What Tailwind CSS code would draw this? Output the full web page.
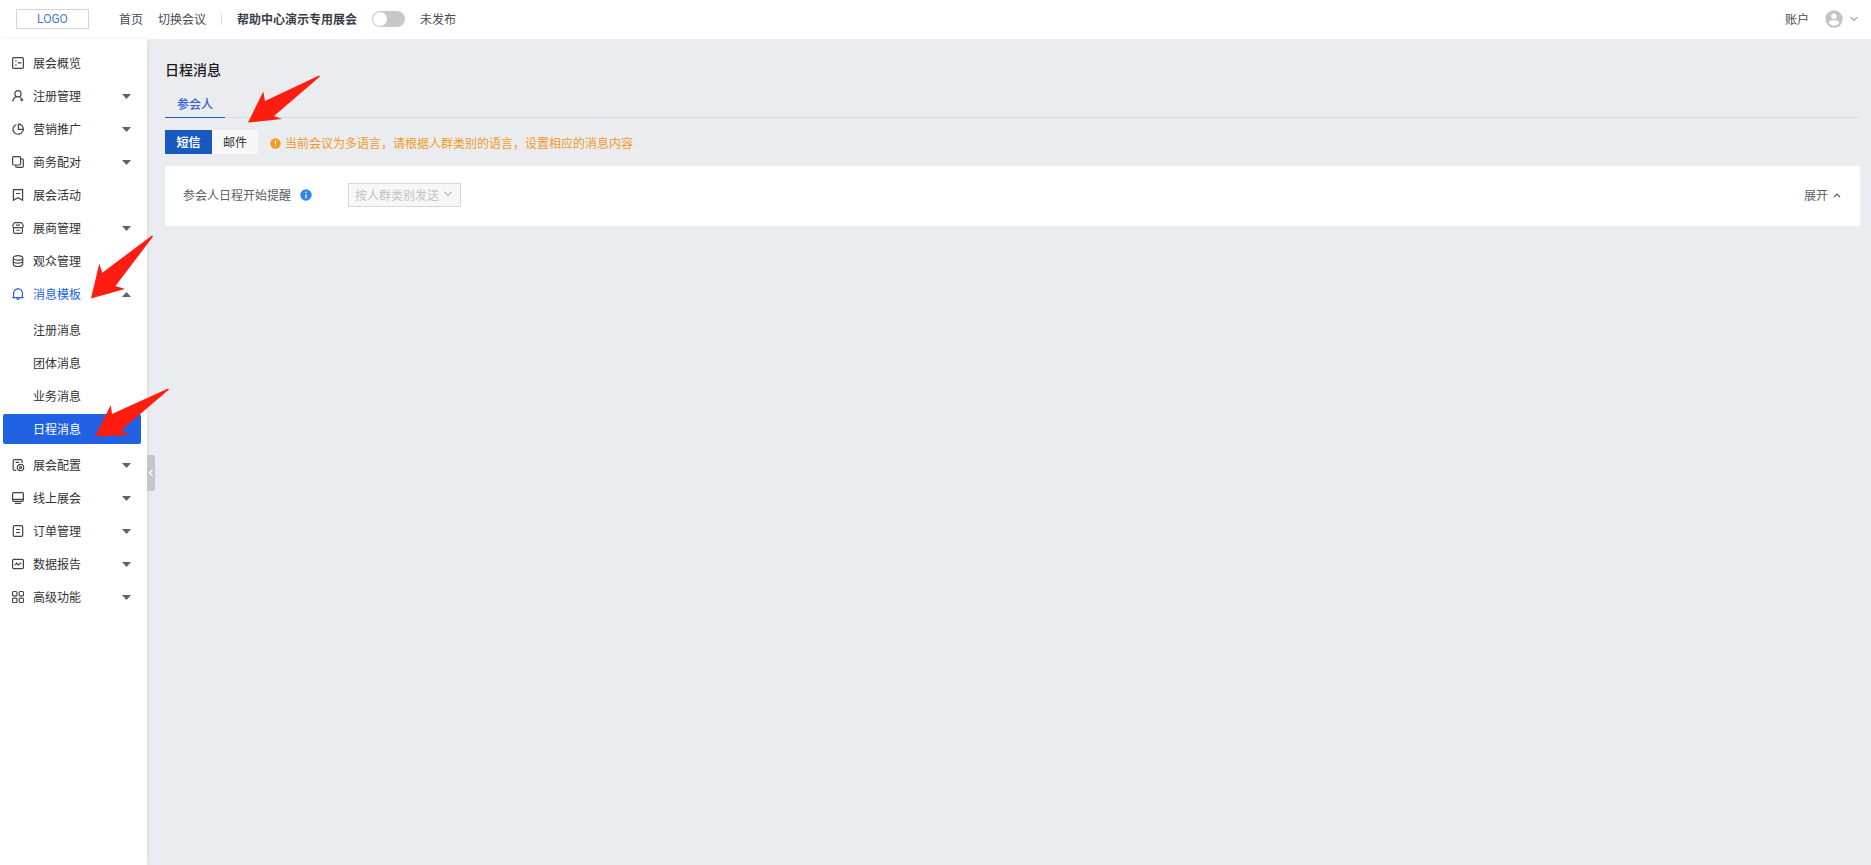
<!DOCTYPE html>
<html lang="zh-CN">
  <head>
    <meta charset="UTF-8" />
    <meta name="viewport" content="width=device-width, initial-scale=1.0" />
    <title>日程消息</title>

    <!-- Tailwind CSS -->
    <script src="https://cdn.jsdelivr.net/npm/@tailwindcss/browser@4"></script>
  </head>
  <body class="relative flex min-h-screen flex-col bg-[#eaecf0] font-['Noto_Sans_CJK_SC',sans-serif] text-[12px] leading-[18px] text-[#333]">
    <!-- Header -->
    <header class="flex h-[39px] shrink-0 items-center bg-white pr-3 pb-[2px] pl-4 text-[#474c55]">
      <a href="#" class="flex h-5 w-[73px] items-center justify-center border border-[#ccd5e2] font-[Roboto,sans-serif] text-[#4c7ac6]">LOGO</a>
      <nav class="ml-[30px] flex items-center">
        <a href="#">首页</a>
        <a href="#" class="ml-[15px]">切换会议</a>
      </nav>
      <span class="ml-[15px] h-3 w-px bg-[#dcdfe6]"></span>
      <h1 class="ml-[15px] font-bold text-[#3a3f48]">帮助中心演示专用展会</h1>
      <label class="ml-[15px] flex items-center gap-[15px]">
        <input type="checkbox" role="switch" class="peer sr-only" />
        <span class="flex h-4 w-[33px] items-center rounded-full bg-[#c8c8c8] px-px peer-checked:justify-end peer-checked:bg-[#2161e4]"><span class="size-[14px] rounded-full bg-white"></span></span>
        <span>未发布</span>
      </label>

      <div class="ml-auto flex items-center">
        <a href="#">账户</a>
        <button aria-label="用户菜单" class="ml-4 flex items-center gap-[6px]">
          <svg viewBox="0 0 18 18" class="size-[18px]">
            <circle cx="9" cy="9" r="8.7" fill="#c4c4c6" />
            <circle cx="9" cy="6.3" r="2.7" fill="#fff" />
            <path d="M3.8 12.9c0-1.900 2.500-2.600 5.200-2.600s5.200.7 5.200 2.600c-1.100 1.700-3 2.600-5.200 2.600s-4.100-.9-5.200-2.600z" fill="#fff" />
          </svg>
          <svg viewBox="0 0 10 10" class="size-[10px]" fill="none" stroke="#a3a6ad" stroke-width="1.100"><path d="M1.500 3 5 6.500 8.500 3" /></svg>
        </button>
      </div>
    </header>

    <div class="flex flex-1">
      <!-- Sidebar -->
      <aside class="z-10 w-[147px] shrink-0 bg-white pt-[9px] pr-[6px] pl-[3px] shadow-[1px_0_4px_rgba(0,0,0,0.08)]">
        <nav class="flex flex-col gap-[3px]">
          <a href="#" class="flex h-[30px] items-center gap-2 pr-[10px] pl-2">
            <svg viewBox="0 0 14 14" class="size-[14px]" fill="none" stroke="#444" stroke-width="1.200"><rect x="1.600" y="1.600" width="10.800" height="10.800" rx="1.200" /><path d="M4 5h1.800M4 9h1.800M6.800 6.900h3.700" /></svg>
            <span>展会概览</span>
          </a>
          <button class="flex h-[30px] items-center gap-2 pr-[10px] pl-2">
            <svg viewBox="0 0 14 14" class="size-[14px]" fill="none" stroke="#444" stroke-width="1.200"><circle cx="7" cy="4.700" r="3.100" /><path d="M2 12.500c0-2.600 1.500-4.300 3.600-4.900M8.500 7.600l1.700 1.600M10.800 9.300v3M9.300 10.800h3" /></svg>
            <span>注册管理</span>
            <svg viewBox="0 0 9 5" class="ml-auto h-[5px] w-[9px]" fill="#606266"><path d="M0 0h9L4.500 5z" /></svg>
          </button>
          <button class="flex h-[30px] items-center gap-2 pr-[10px] pl-2">
            <svg viewBox="0 0 14 14" class="size-[14px]" fill="none" stroke="#444" stroke-width="1.200"><path d="M5.400 2.500a5 5 0 1 0 6.200 6.600M7.400 1.900v5.400h5M7.400 1.900a5.200 5.200 0 0 1 5 5.400q0 1-.8 1.800" /></svg>
            <span>营销推广</span>
            <svg viewBox="0 0 9 5" class="ml-auto h-[5px] w-[9px]" fill="#606266"><path d="M0 0h9L4.500 5z" /></svg>
          </button>
          <button class="flex h-[30px] items-center gap-2 pr-[10px] pl-2">
            <svg viewBox="0 0 14 14" class="size-[14px]" fill="none" stroke="#444" stroke-width="1.200"><rect x="1.600" y="1.600" width="8" height="8.400" rx="1.200" /><path d="M9.800 3.800h1.200q1.300 0 1.300 1.200v6.200q0 1.200-1.200 1.200H6q-1.200 0-1.200-1.200V10" /></svg>
            <span>商务配对</span>
            <svg viewBox="0 0 9 5" class="ml-auto h-[5px] w-[9px]" fill="#606266"><path d="M0 0h9L4.500 5z" /></svg>
          </button>
          <a href="#" class="flex h-[30px] items-center gap-2 pr-[10px] pl-2">
            <svg viewBox="0 0 14 14" class="size-[14px]" fill="none" stroke="#444" stroke-width="1.200"><path d="M2.400 1.700h9.200v10.600L7 9.700l-4.600 2.600zM5 5.500h4" /></svg>
            <span>展会活动</span>
          </a>
          <button class="flex h-[30px] items-center gap-2 pr-[10px] pl-2">
            <svg viewBox="0 0 14 14" class="size-[14px]" fill="none" stroke="#444" stroke-width="1.100"><path d="M4 1.600h6q1 0 1.400 1.200l.9 2.200q0 1.600-1.600 1.600H3.300Q1.700 6.600 1.700 5l.9-2.200Q3 1.600 4 1.600zM2.600 6.600v4.500q0 1.300 1.300 1.300h6.200q1.300 0 1.300-1.300V6.600M5 4.100h4M5.300 9.300h3.400" /></svg>
            <span>展商管理</span>
            <svg viewBox="0 0 9 5" class="ml-auto h-[5px] w-[9px]" fill="#606266"><path d="M0 0h9L4.500 5z" /></svg>
          </button>
          <a href="#" class="flex h-[30px] items-center gap-2 pr-[10px] pl-2">
            <svg viewBox="0 0 14 14" class="size-[14px]" fill="none" stroke="#444" stroke-width="1.200"><ellipse cx="7" cy="3.900" rx="4.700" ry="2.200" /><path d="M2.300 4v6.200c0 1.300 2.100 2.300 4.700 2.300s4.700-1 4.700-2.300V4M2.300 7c0 1.200 2.100 2.200 4.700 2.200s4.700-1 4.700-2.200" /></svg>
            <span>观众管理</span>
          </a>
          <button class="flex h-[30px] items-center gap-2 pr-[10px] pl-2 text-[#2161e4]">
            <svg viewBox="0 0 14 14" class="size-[14px]" fill="none" stroke="currentColor" stroke-width="1.200"><path d="M1.300 10.700h11.400M2.600 10.700V6.300a4.400 4.400 0 0 1 8.800 0v4.400M5.600 11.500q1.400 1.900 2.800 0M7 1v1.200" /></svg>
            <span>消息模板</span>
            <svg viewBox="0 0 9 5" class="ml-auto h-[5px] w-[9px]" fill="#606266"><path d="M0 5h9L4.500 0z" /></svg>
          </button>

          <!-- Submenu -->
          <div class="my-[3px] flex flex-col gap-[3px]">
            <a href="#" class="flex h-[30px] items-center pl-[30px]">注册消息</a>
            <a href="#" class="flex h-[30px] items-center pl-[30px]">团体消息</a>
            <a href="#" class="flex h-[30px] items-center pl-[30px]">业务消息</a>
            <a href="#" class="flex h-[30px] items-center rounded-xs bg-[#2161e4] pl-[30px] text-white">日程消息</a>
          </div>

          <button class="flex h-[30px] items-center gap-2 pr-[10px] pl-2">
            <svg viewBox="0 0 14 14" class="size-[14px]" fill="none" stroke="#444" stroke-width="1.200"><path d="M11.200 5V2.800q0-1.200-1.200-1.200H3.400q-1.200 0-1.200 1.200v8.400q0 1.200 1.200 1.200h2M4.600 4.400h3.600" /><circle cx="9.500" cy="9.500" r="3.200" /><circle cx="9.500" cy="9.500" r="1" /></svg>
            <span>展会配置</span>
            <svg viewBox="0 0 9 5" class="ml-auto h-[5px] w-[9px]" fill="#606266"><path d="M0 0h9L4.500 5z" /></svg>
          </button>
          <button class="flex h-[30px] items-center gap-2 pr-[10px] pl-2">
            <svg viewBox="0 0 14 14" class="size-[14px]" fill="none" stroke="#444" stroke-width="1.200"><rect x="1.600" y="1.600" width="10.800" height="8.800" rx="1.200" /><path d="M1.600 8.400h10.800M3.800 12.400h6.400" /></svg>
            <span>线上展会</span>
            <svg viewBox="0 0 9 5" class="ml-auto h-[5px] w-[9px]" fill="#606266"><path d="M0 0h9L4.500 5z" /></svg>
          </button>
          <button class="flex h-[30px] items-center gap-2 pr-[10px] pl-2">
            <svg viewBox="0 0 14 14" class="size-[14px]" fill="none" stroke="#444" stroke-width="1.200"><rect x="2.300" y="1.600" width="9.400" height="10.800" rx="1.200" /><path d="M5 5.500h4M5 8.500h4" /></svg>
            <span>订单管理</span>
            <svg viewBox="0 0 9 5" class="ml-auto h-[5px] w-[9px]" fill="#606266"><path d="M0 0h9L4.500 5z" /></svg>
          </button>
          <button class="flex h-[30px] items-center gap-2 pr-[10px] pl-2">
            <svg viewBox="0 0 14 14" class="size-[14px]" fill="none" stroke="#444" stroke-width="1.200"><rect x="1.600" y="2.400" width="10.800" height="9.200" rx="1.200" /><path d="M3.800 8.200 5.700 6.200 7.600 8l2.600-2.400" /></svg>
            <span>数据报告</span>
            <svg viewBox="0 0 9 5" class="ml-auto h-[5px] w-[9px]" fill="#606266"><path d="M0 0h9L4.500 5z" /></svg>
          </button>
          <button class="flex h-[30px] items-center gap-2 pr-[10px] pl-2">
            <svg viewBox="0 0 14 14" class="size-[14px]" fill="none" stroke="#444" stroke-width="1.100"><rect x="1.500" y="1.500" width="4.400" height="4.400" rx="1" /><rect x="8.100" y="1.500" width="4.400" height="4.400" rx="1" /><rect x="1.500" y="8.100" width="4.400" height="4.400" rx="1" /><rect x="8.100" y="8.100" width="4.400" height="4.400" rx="1" /></svg>
            <span>高级功能</span>
            <svg viewBox="0 0 9 5" class="ml-auto h-[5px] w-[9px]" fill="#606266"><path d="M0 0h9L4.500 5z" /></svg>
          </button>
        </nav>
      </aside>

      <!-- Content -->
      <main class="relative flex-1 pt-5 pr-[11px] pl-[18px]">
        <!-- Sidebar collapse handle -->
        <button aria-label="收起菜单" class="absolute top-[416px] left-0 z-20 flex h-9 w-2 items-center justify-center rounded-r-xs bg-[#c4c6c9]">
          <svg viewBox="0 0 6 8" class="h-2 w-[6px]" fill="none" stroke="#fff" stroke-width="1.200"><path d="M4.500 1.200 1.500 4l3 2.800" /></svg>
        </button>

        <h2 class="text-[14px] leading-5 font-medium text-[#1a1a1a]">日程消息</h2>

        <div class="mt-[14px] flex border-b border-[#d9dbe0]">
          <button class="-mb-px h-[25px] border-b border-[#2559bd] px-3 pb-[3px] font-medium text-[#3560d8]">参会人</button>
        </div>

        <div class="mt-3 flex h-6 items-center">
          <button class="h-6 w-[47px] bg-[#1859bf] font-bold text-white">短信</button>
          <button class="h-6 w-[46px] bg-[#f7f7f8]">邮件</button>
          <p class="ml-3 flex items-center gap-1 pt-[2px] text-[#f39a1e]">
            <svg viewBox="0 0 11 11" class="size-[11px]"><circle cx="5.500" cy="5.500" r="5.200" fill="#f39a1e" /><path d="M5.500 2.500v3.800M5.500 7.400v1.200" stroke="#fff" stroke-width="1.100" /></svg>
            当前会议为多语言，请根据人群类别的语言，设置相应的消息内容
          </p>
        </div>

        <section class="mt-3 flex h-[60px] items-center rounded-xs bg-white px-[18px] pb-[2px] text-[#5a5e66]">
          <label for="send-mode">参会人日程开始提醒</label>
          <svg viewBox="0 0 12 12" class="ml-[9px] size-3"><circle cx="6" cy="6" r="5.700" fill="#2f86e8" /><path d="M6 2.800v1.300M6 5.200v4" stroke="#fff" stroke-width="1.200" /></svg>
          <div class="relative ml-9">
            <select id="send-mode" disabled class="h-6 w-[113px] appearance-none border border-[#d5d7db] bg-[#f7f7f7] pl-[6px] text-[#c0c2c6] opacity-100">
              <option>按人群类别发送</option>
            </select>
            <svg viewBox="0 0 10 10" class="pointer-events-none absolute top-[6px] right-2 size-[10px]" fill="none" stroke="#b4b6ba" stroke-width="1.200"><path d="M1.500 3 5 6.500 8.500 3" /></svg>
          </div>
          <button class="ml-auto flex items-center gap-1">
            展开
            <svg viewBox="0 0 10 10" class="size-[10px]" fill="none" stroke="#5a5e66" stroke-width="1.100"><path d="M2 7 5 4l3 3" /></svg>
          </button>
        </section>
      </main>
    </div>

    <!-- Guide arrows -->
    <svg viewBox="0 0 73 48" class="pointer-events-none absolute top-[75px] left-[248px] z-30 h-12 w-[73px]" fill="#ff1d12"><path d="M0 47.500 15.300 16.500 17 26 71 .5l1 1L26 41l8 3z" /></svg>
    <svg viewBox="0 0 62 64" class="pointer-events-none absolute top-[235px] left-[91px] z-30 h-16 w-[62px]" fill="#ff1d12"><path d="M0 63.500 8.300 28.500l3 9.200L61 .5l1 1L24.500 51l9.500 3z" /></svg>
    <svg viewBox="0 0 74 49" class="pointer-events-none absolute top-[388px] left-[95px] z-30 h-[49px] w-[74px]" fill="#ff1d12"><path d="M0 48.500 15.800 17l1.200 9L73 .5l1 1L26.500 42l7.500 5z" /></svg>
  </body>
</html>
